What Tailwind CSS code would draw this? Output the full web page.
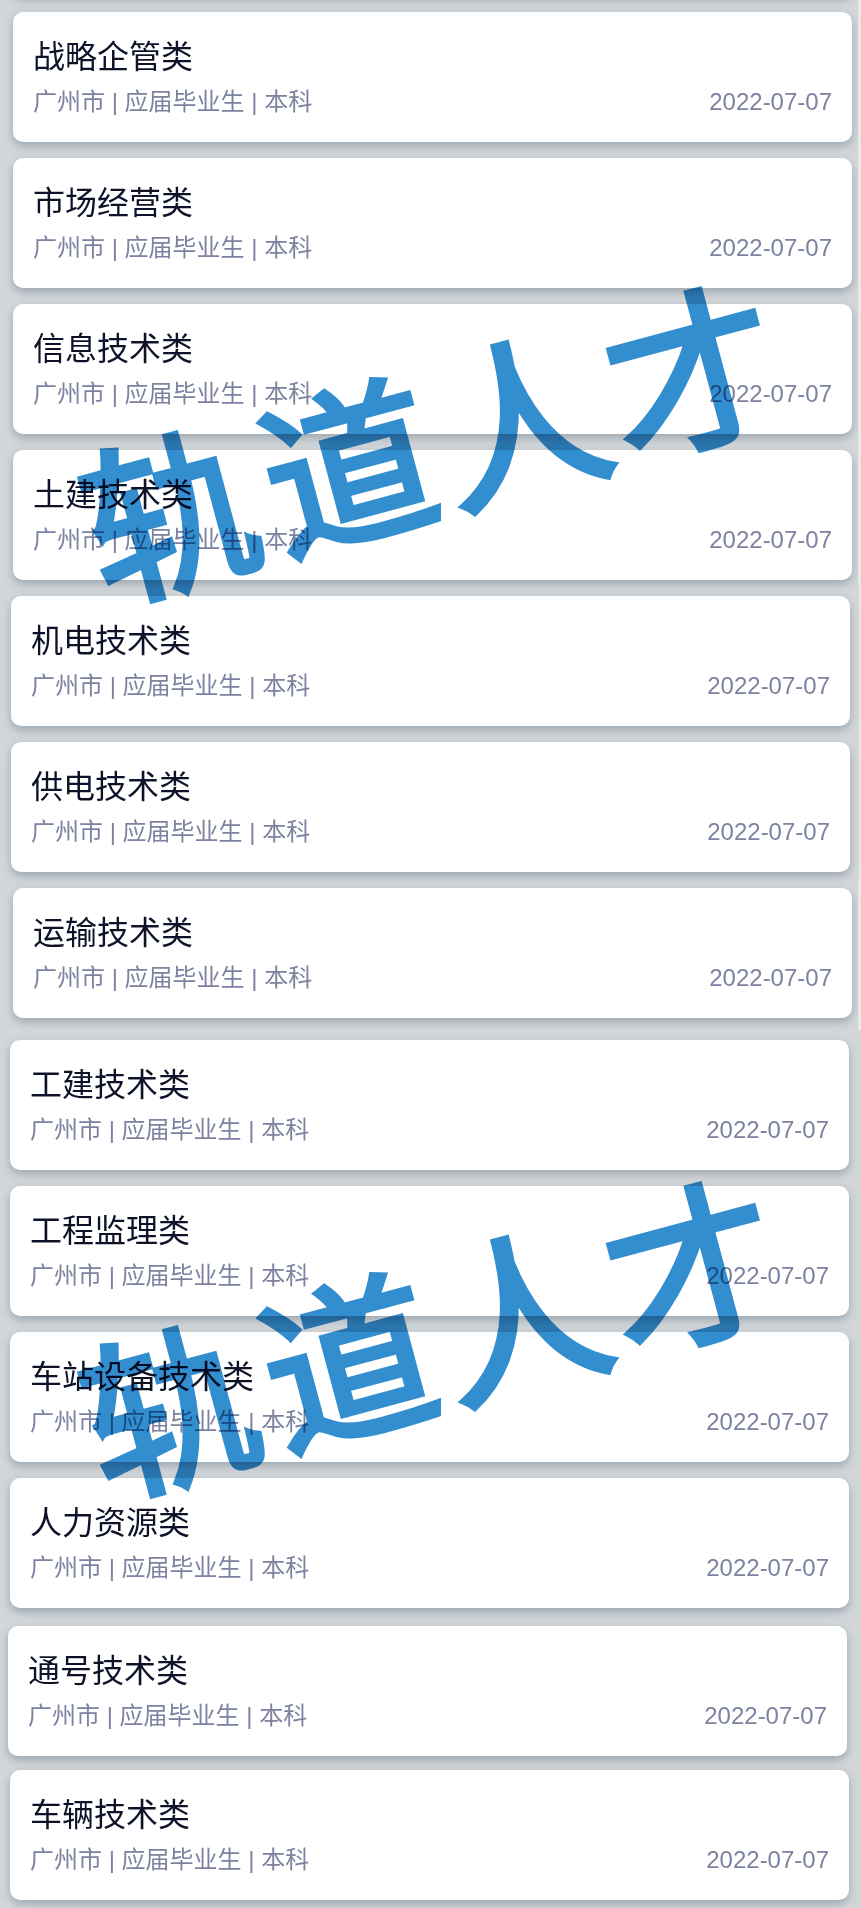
<!DOCTYPE html>
<html lang="zh-CN">
<head>
<meta charset="utf-8">
<title>轨道人才</title>
<script src="https://cdn.jsdelivr.net/npm/@tailwindcss/browser@4"></script>
</head>
<body class="bg-[#d2d6d9]">
<div class="relative h-[1908px] w-[861px] overflow-hidden bg-[#d3d7da] font-['Liberation_Sans','Noto_Sans_CJK_SC',sans-serif]">
  <main id="list" class="flow-root">
    <div class="-mt-[134px] ml-[13px] h-[130px] w-[839px] rounded-[10px] bg-white shadow-[0_4px_10px_rgba(110,125,140,0.55)]"></div>
  </main>
  <div class="absolute right-0 top-0 h-[584px] w-[3px] bg-[#e6e8ea]"></div>
  <div class="absolute right-0 top-[584px] h-[296px] w-[2px] bg-[#e6e8ea]"></div>
  <div class="absolute right-0 top-[880px] h-[150px] w-[3px] bg-[#e6e8ea]"></div>
  <svg class="pointer-events-none absolute inset-0 mix-blend-multiply" width="861" height="1908" viewBox="0 0 861 1908" fill="#338ecf" stroke="#338ecf" stroke-width="5" stroke-miterlimit="3" font-family="'Noto Sans CJK SC',sans-serif" font-size="172" font-weight="400">
    <defs><clipPath id="edge"><path d="M0 0H441V700H0z"/></clipPath></defs>
    <g>
      <g clip-path="url(#edge)"><text transform="rotate(-15)" x="-55 130" y="607">轨道</text></g>
      <text transform="rotate(-15)" x="308 486" y="606 605">人才</text>
    </g>
    <g transform="translate(0 895)">
      <g clip-path="url(#edge)"><text transform="rotate(-15)" x="-55 130" y="607">轨道</text></g>
      <text transform="rotate(-15)" x="308 486" y="606 605">人才</text>
    </g>
  </svg>
</div>
<template id="card">
  <article class="h-[130px] w-[839px] rounded-[10px] bg-white px-5 pt-[25px] shadow-[0_4px_10px_rgba(110,125,140,0.55)]">
    <h2 class="h-10 text-[32px] leading-10 text-[#0d1228]"></h2>
    <div class="mt-[9px] flex h-8 items-center justify-between text-2xl leading-8 text-[#7c82a0]">
      <p>广州市 | 应届毕业生 | 本科</p><time>2022-07-07</time>
    </div>
  </article>
</template>
<script>
  // title, left margin, gap above
  const jobs = [
    ['战略企管类', 13, 16], ['市场经营类', 13, 16], ['信息技术类', 13, 16], ['土建技术类', 13, 16],
    ['机电技术类', 11, 16], ['供电技术类', 11, 16], ['运输技术类', 13, 16], ['工建技术类', 10, 22],
    ['工程监理类', 10, 16], ['车站设备技术类', 10, 16], ['人力资源类', 10, 16], ['通号技术类', 8, 18], ['车辆技术类', 10, 14]
  ];
  const list = document.getElementById('list');
  for (const [title, left, top] of jobs) {
    const n = document.getElementById('card').content.cloneNode(true);
    n.querySelector('h2').textContent = title;
    n.querySelector('article').style.margin = `${top}px 0 0 ${left}px`;
    list.append(n);
  }
</script>
</body>
</html>
